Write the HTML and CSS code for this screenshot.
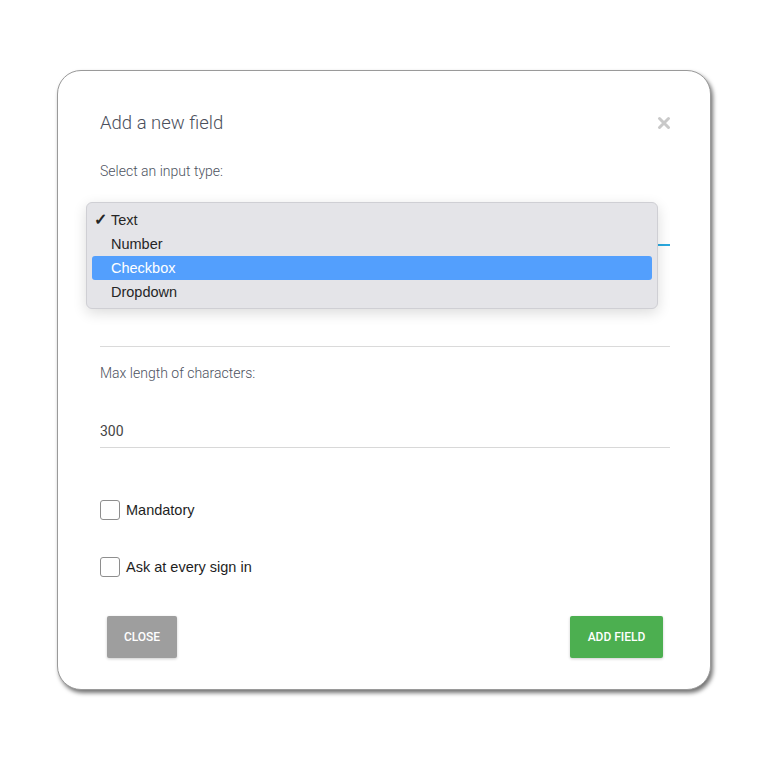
FILE: index.html
```html
<!DOCTYPE html>
<html lang="en">
<head>
  <meta charset="UTF-8" />
  <meta name="viewport" content="width=device-width, initial-scale=1.0"/>
  <title>Add a new field</title>
  <link rel="stylesheet" href="styles.css">
</head>
<body>
  <div class="modal">
    <header class="modal-head">
      <h1>Add a new field</h1>
      <button class="close-x" aria-label="Close">
        <svg width="14" height="14" viewBox="0 0 14 14">
          <path d="M2.5 2.5 L11.5 11.5 M11.5 2.5 L2.5 11.5" stroke="#c9c9c9" stroke-width="3" stroke-linecap="round"/>
        </svg>
      </button>
    </header>

    <p class="label">Select an input type:</p>
    <div class="select-field">
      <ul class="popup">
        <li class="checked"><span class="tick">✓</span>Text</li>
        <li>Number</li>
        <li class="active">Checkbox</li>
        <li>Dropdown</li>
      </ul>
    </div>

    <div class="blank-field"></div>

    <p class="label label-max">Max length of characters:</p>
    <div class="text-field">300</div>

    <label class="check first"><span class="box"></span>Mandatory</label>
    <label class="check"><span class="box"></span>Ask at every sign in</label>

    <footer class="actions">
      <button class="btn btn-close">CLOSE</button>
      <button class="btn btn-add">ADD FIELD</button>
    </footer>
  </div>
</body>
</html>
```

FILE: styles.css
```css
* {
  box-sizing: border-box;
  margin: 0;
  padding: 0;
}

body {
  font-family: Roboto, 'Liberation Sans', sans-serif;
  background: #fff;
  width: 768px;
  height: 768px;
  overflow: hidden;
}

.modal {
  margin: 70px 0 0 57px;
  width: 654px;
  height: 620px;
  padding: 40px 40px 0 42px;
  background: #fff;
  border: 1px solid #9a9a9a;
  border-radius: 24px;
  box-shadow: 2px 3px 4px rgba(0, 0, 0, 0.55);
  display: flex;
  flex-direction: column;
}

.modal-head {
  display: flex;
  justify-content: space-between;
  align-items: center;
  height: 24px;
}

.modal-head h1 {
  font-size: 18.5px;
  font-weight: 300;
  color: #4b505c;
  line-height: 24px;
}

.close-x {
  background: none;
  border: none;
  width: 14px;
  height: 14px;
  margin-right: -1px;
  display: flex;
}

.label {
  font-size: 14px;
  font-weight: 300;
  color: #4d525e;
  line-height: 20px;
}

.modal-head + .label {
  margin-top: 26px;
}

.select-field {
  position: relative;
  height: 40px;
  margin-top: 25px;
  border-bottom: 2px solid #2aa9df;
}

.popup {
  position: absolute;
  left: -14px;
  top: -4px;
  width: 572px;
  list-style: none;
  background: #e4e4e8;
  border: 1px solid #cfcfd4;
  border-radius: 6px;
  box-shadow: 0 4px 14px rgba(0, 0, 0, 0.14);
  padding: 5px 5px 4px;
  font-family: 'Liberation Sans', Arial, sans-serif;
  font-size: 14.5px;
  color: #262626;
}

.popup li {
  height: 24px;
  line-height: 24px;
  padding-left: 19px;
  border-radius: 3px;
  position: relative;
}

.popup .tick {
  position: absolute;
  left: 2px;
  font-size: 16px;
  font-weight: bold;
}

.popup li.active {
  background: #539ffd;
  color: #fff;
}

.blank-field {
  height: 101px;
  border-bottom: 1px solid #dadada;
}

.label-max {
  margin-top: 16px;
}

.text-field {
  margin-top: 38px;
  height: 27px;
  font-size: 14px;
  color: #454545;
  line-height: 20px;
  border-bottom: 1px solid #d8d8d8;
}

.check {
  display: flex;
  align-items: center;
  gap: 6px;
  height: 20px;
  font-family: 'Liberation Sans', Arial, sans-serif;
  font-size: 14.5px;
  color: #1e1e1e;
  margin-top: 37px;
}

.check.first {
  margin-top: 52px;
}

.box {
  width: 20px;
  height: 20px;
  border: 1.5px solid #8e8e8e;
  border-radius: 3px;
  background: #fff;
}

.actions {
  display: flex;
  justify-content: space-between;
  margin-top: 39px;
  padding: 0 7px 0 7px;
}

.btn {
  height: 42px;
  border: none;
  border-radius: 2px;
  color: #fff;
  font-family: Roboto, sans-serif;
  font-size: 12px;
  font-weight: 500;
  box-shadow: 0 1px 3px rgba(0, 0, 0, 0.2);
}

.btn-close {
  width: 70px;
  background: #9e9e9e;
}

.btn-add {
  width: 93px;
  background: #4caf50;
}
```
